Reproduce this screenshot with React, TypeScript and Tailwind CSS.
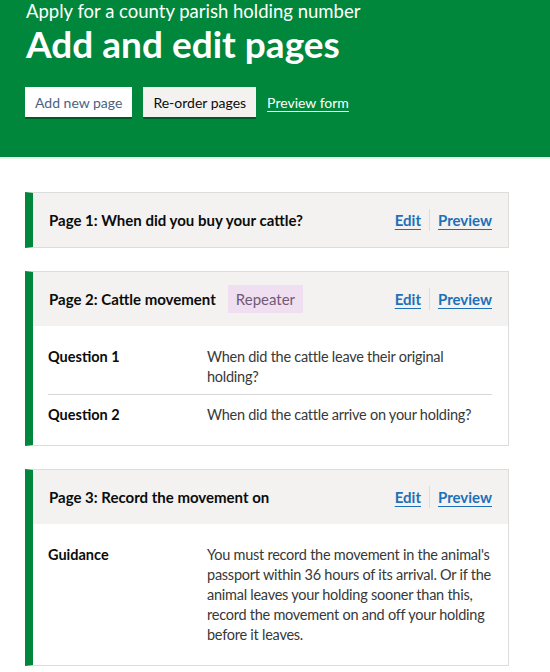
import React from 'react';

const FONT = { fontFamily: 'Lato, "Noto Sans", Arial, sans-serif' };

interface Row {
  label: string;
  value: string[];
}

interface PageCard {
  title: string;
  repeater?: boolean;
  rows: Row[];
}

const PAGES: PageCard[] = [
  { title: 'Page 1: When did you buy your cattle?', rows: [] },
  {
    title: 'Page 2: Cattle movement',
    repeater: true,
    rows: [
      { label: 'Question 1', value: ['When did the cattle leave their original', 'holding?'] },
      { label: 'Question 2', value: ['When did the cattle arrive on your holding?'] },
    ],
  },
  {
    title: 'Page 3: Record the movement on',
    rows: [
      {
        label: 'Guidance',
        value: [
          "You must record the movement in the animal's",
          'passport within 36 hours of its arrival. Or if the',
          'animal leaves your holding sooner than this,',
          'record the movement on and off your holding',
          'before it leaves.',
        ],
      },
    ],
  },
];

function Card({ page }: { page: PageCard }) {
  return (
    <div className="mb-[23px] border border-[#dcdcdc] border-l-[8px] border-l-[#00873c] bg-white">
      <div className="flex h-[54px] items-center justify-between bg-[#f3f2f1] pl-[16px] pr-[16px]">
        <div className="flex items-center">
          <span className="text-[15px] font-bold text-[#0b0c0c]">{page.title}</span>
          {page.repeater && (
            <span className="ml-[12px] bg-[#efdff1] px-[8px] py-[3px] text-[15px] text-[#6f5a74]">Repeater</span>
          )}
        </div>
        <div className="flex items-center text-[15px] font-bold text-[#1d70b8]">
          <a className="underline underline-offset-[3px]">Edit</a>
          <span className="mx-[8px] h-[22px] w-px bg-[#dcdcdc]" />
          <a className="underline underline-offset-[3px]">Preview</a>
        </div>
      </div>
      {page.rows.length > 0 && (
        <div className="pl-[15px] pr-[16px] pt-[21px] pb-[20px]">
          {page.rows.map((r, i) => (
            <div
              key={r.label}
              className={`flex text-[14.5px] leading-[20px] ${
                i < page.rows.length - 1 ? 'border-b border-[#d8d8d8] pb-[7px]' : ''
              } ${i > 0 ? 'pt-[10px]' : ''}`}
            >
              <div className="w-[159px] shrink-0 font-bold text-[#0b0c0c]">{r.label}</div>
              <div className="-mr-[14px] tracking-[-0.25px] text-[#383838]">
                {r.value.map((line) => (
                  <span key={line} className="block whitespace-nowrap">
                    {line}
                  </span>
                ))}
              </div>
            </div>
          ))}
        </div>
      )}
    </div>
  );
}

export default function App() {
  return (
    <div className="min-h-screen bg-white" style={FONT}>
      <div className="bg-[#00873c] px-[26px] pb-[40px] text-white">
        <p className="text-[18.5px] leading-[22px]">Apply for a county parish holding number</p>
        <h1 className="mt-[2px] text-[37px] font-bold leading-[40px]">Add and edit pages</h1>
        <div className="-ml-px mt-[23px] flex items-center gap-[11px]">
          <button className="h-[30px] bg-white px-[10px] text-[14px] text-[#4a6285] shadow-[0_2px_0_#005a28]">
            Add new page
          </button>
          <button className="h-[30px] bg-[#f3f2f1] px-[10px] text-[14px] text-[#0b0c0c] shadow-[0_2px_0_#005a28]">
            Re-order pages
          </button>
          <a className="text-[14px] underline underline-offset-[3px]">Preview form</a>
        </div>
      </div>
      <div className="h-[2px] bg-[#e6f3ec]" />
      <div className="px-[25px] pt-[33px] pr-[41px]">
        {PAGES.map((p) => (
          <Card key={p.title} page={p} />
        ))}
      </div>
    </div>
  );
}
